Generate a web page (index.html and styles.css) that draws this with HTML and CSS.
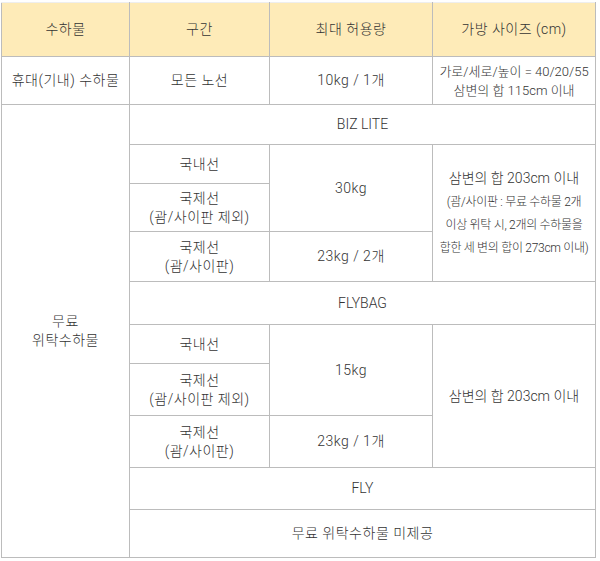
FILE: index.html
```html
<!DOCTYPE html>
<html lang="ko">
<head>
<meta charset="utf-8">
<link rel="stylesheet" href="styles.css">
</head>
<body>
<table class="bag">
  <colgroup>
    <col class="c1"><col class="c2"><col class="c3"><col class="c4">
  </colgroup>
  <tr class="head h54">
    <th>수하물</th><th>구간</th><th>최대 허용량</th><th>가방 사이즈 (cm)</th>
  </tr>
  <tr class="h48">
    <td>휴대(기내) 수하물</td><td>모든 노선</td><td>10kg / 1개</td>
    <td class="small">가로/세로/높이 = 40/20/55<br>삼변의 합 115cm 이내</td>
  </tr>
  <tr class="h40">
    <td rowspan="11">무료<br>위탁수하물</td>
    <td colspan="3" class="latin">BIZ LITE</td>
  </tr>
  <tr class="h39">
    <td>국내선</td><td rowspan="2">30kg</td>
    <td rowspan="3" class="note"><span class="big">삼변의 합 203cm 이내</span><br>(괌/사이판 : 무료 수하물 2개<br>이상 위탁 시, 2개의 수하물을<br>합한 세 변의 합이 273cm 이내)</td>
  </tr>
  <tr class="h48"><td>국제선<br>(괌/사이판 제외)</td></tr>
  <tr class="h50"><td>국제선<br>(괌/사이판)</td><td>23kg / 2개</td></tr>
  <tr class="h43"><td colspan="3" class="latin">FLYBAG</td></tr>
  <tr class="h39">
    <td>국내선</td><td rowspan="2">15kg</td>
    <td rowspan="3" class="plain">삼변의 합 203cm 이내</td>
  </tr>
  <tr class="h52"><td>국제선<br>(괌/사이판 제외)</td></tr>
  <tr class="h52"><td>국제선<br>(괌/사이판)</td><td>23kg / 1개</td></tr>
  <tr class="h42"><td colspan="3" class="latin">FLY</td></tr>
  <tr class="h48"><td colspan="3">무료 위탁수하물 미제공</td></tr>
</table>
</body>
</html>
```
FILE: styles.css
```css
html, body {
  margin: 0;
  padding: 0;
  background: #fff;
}
body {
  padding: 2px 0 0 1px;
  font-family: Roboto, "Noto Sans CJK KR", sans-serif;
  color: #333;
}
.bag {
  border-collapse: collapse;
  table-layout: fixed;
  width: 595px;
  font-size: 14px;
  line-height: 19px;
}
.c1 { width: 128px; }
.c2 { width: 140px; }
.c3 { width: 163px; }
.c4 { width: 163px; }
.bag th, .bag td {
  border: 1px solid #bcbcbc;
  text-align: center;
  vertical-align: middle;
  padding: 0;
  font-weight: 300;
  letter-spacing: 0.5px;
}
.bag td.latin,
.bag td.plain {
  letter-spacing: 0;
}
.head th {
  background: #feebb8;
  border-top-color: #eee;
}
.bag td.small {
  font-size: 13px;
  line-height: 19px;
  letter-spacing: 0;
}
.bag td.note {
  font-size: 12px;
  line-height: 23px;
  letter-spacing: -0.3px;
}
.note .big {
  font-size: 14px;
  letter-spacing: 0;
}
.h54 { height: 54px; }
.h48 { height: 48px; }
.h40 { height: 40px; }
.h39 { height: 39px; }
.h50 { height: 50px; }
.h43 { height: 43px; }
.h52 { height: 52px; }
.h42 { height: 42px; }
```
